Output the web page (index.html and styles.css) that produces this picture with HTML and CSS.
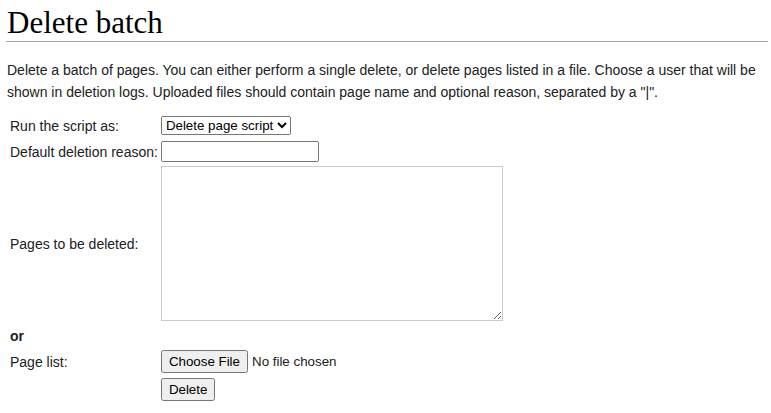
FILE: index.html
```html
<!DOCTYPE html>
<html lang="en">
<head>
    <meta charset="UTF-8">
    <title>Delete batch</title>
    <link rel="stylesheet" href="styles.css">
</head>
<body>
    <div class="content">
        <h1 class="first-heading">Delete batch</h1>
        <p class="intro">Delete a batch of pages. You can either perform a single delete, or delete pages listed in a file. Choose a user that will be shown in deletion logs. Uploaded files should contain page name and optional reason, separated by a "|".</p>

        <form class="batch-form">
            <table>
                <tr>
                    <td class="label">Run the script as:</td>
                    <td>
                        <select name="mode">
                            <option>Delete page script</option>
                            <option>Yourself</option>
                        </select>
                    </td>
                </tr>
                <tr class="row-reason">
                    <td class="label">Default deletion reason:</td>
                    <td><input type="text" name="reason" class="reason"></td>
                </tr>
                <tr>
                    <td class="label">Pages to be deleted:</td>
                    <td><textarea name="pages" class="pages"></textarea></td>
                </tr>
                <tr>
                    <td colspan="2" class="or"><b>or</b></td>
                </tr>
                <tr class="row-file">
                    <td class="label">Page list:</td>
                    <td><input type="file" name="listfile"></td>
                </tr>
                <tr class="row-submit">
                    <td></td>
                    <td><input type="submit" value="Delete"></td>
                </tr>
            </table>
        </form>
    </div>
</body>
</html>
```

FILE: styles.css
```css
body {
    margin: 0;
    background: #fff;
    color: #202122;
    font-family: "Liberation Sans", Arial, sans-serif;
    font-size: 14px;
}

.content {
    padding: 0 3px 0 6px;
}

.first-heading {
    font-family: "Liberation Serif", "DejaVu Serif", serif;
    font-weight: normal;
    font-size: 31px;
    line-height: 36px;
    color: #000;
    margin: 0 0 17px;
    padding: 5px 0 0 1px;
    border-bottom: 1px solid #a2a9b1;
}

.intro {
    margin: 0 0 10px;
    padding-left: 1px;
    line-height: 22px;
}

.batch-form table {
    border-spacing: 2px;
    margin-left: 1px;
}

.batch-form td {
    padding: 1px;
    vertical-align: middle;
}

.batch-form .label {
    padding-right: 0;
}

.batch-form select,
.batch-form input,
.batch-form textarea {
    font-family: "Liberation Sans", Arial, sans-serif;
    font-size: 13.33px;
    margin: 0;
}

.batch-form input[type="submit"],
.batch-form input[type="file"]::file-selector-button {
    padding: 2px 6px;
}

.row-reason td {
    padding-top: 3px;
}

.reason {
    width: 150px;
}

.pages {
    width: 336px;
    height: 149px;
    border: 1px solid #c8ccd1;
    display: block;
}

.batch-form .or {
    padding-top: 4px;
}

.row-file td {
    padding-top: 3px;
}

.row-submit td {
    padding-top: 2px;
}
```
